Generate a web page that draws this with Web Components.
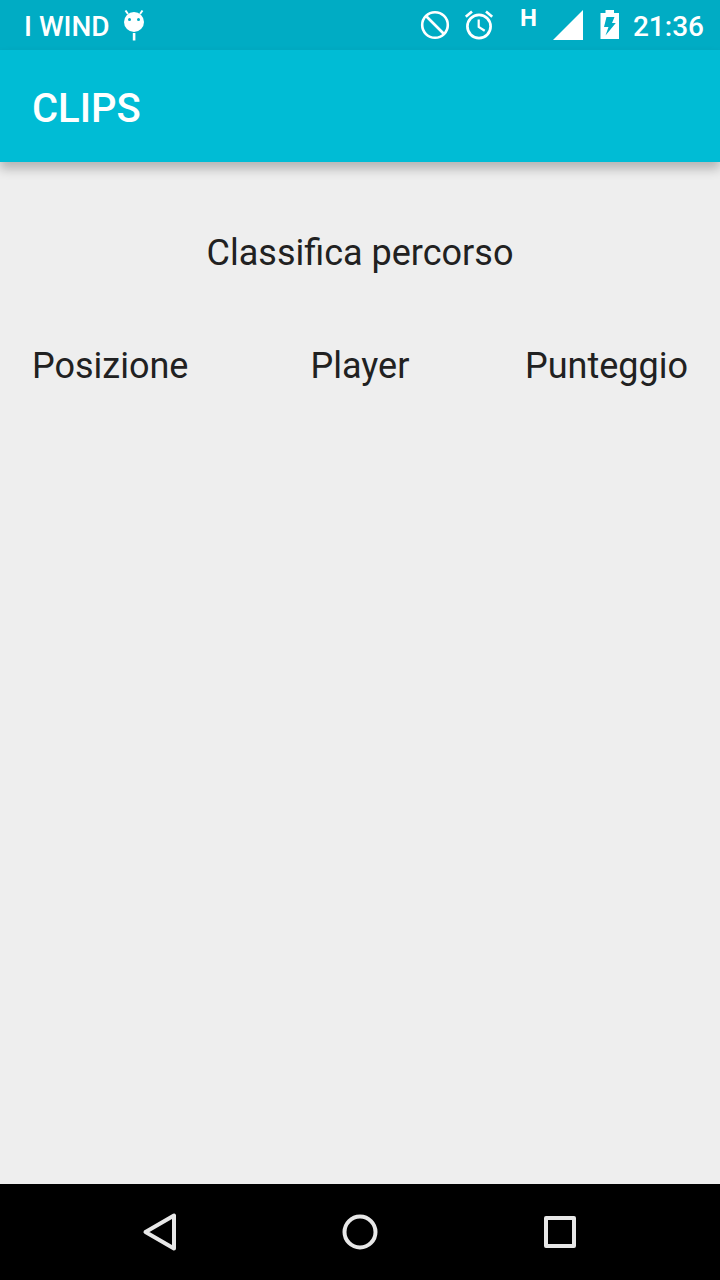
<!DOCTYPE html>
<html lang="it">
<head>
<meta charset="utf-8">
<meta name="viewport" content="width=device-width, initial-scale=1">
<title>CLIPS</title>
<style>
  body { margin: 0; font-family: Roboto, "Noto Sans", sans-serif; background: #eeeeee; }
</style>
</head>
<body>
<clips-screen>
  <status-bar slot="status" carrier="I WIND" network="H" time="21:36"></status-bar>
  <app-bar slot="bar">CLIPS</app-bar>
  <score-board heading="Classifica percorso" columns="Posizione,Player,Punteggio"></score-board>
  <nav-bar slot="nav"></nav-bar>
</clips-screen>

<script>
class BaseElement extends HTMLElement {
  constructor() {
    super();
    this.attachShadow({ mode: "open" });
  }
  connectedCallback() {
    this.shadowRoot.innerHTML = this.render();
  }
}

class ClipsScreen extends BaseElement {
  render() {
    return `
      <style>
        :host { display: flex; flex-direction: column; min-height: 100vh; }
        main { flex: 1; }
      </style>
      <slot name="status"></slot>
      <slot name="bar"></slot>
      <main><slot></slot></main>
      <slot name="nav"></slot>`;
  }
}

class StatusBar extends BaseElement {
  render() {
    return `
      <style>
        :host { display: flex; justify-content: space-between; height: 50px; padding: 0 16px 0 24px;
                background: #00acc4; color: #fff; font-size: 28px; font-weight: 500; line-height: 46px; }
        .side { display: flex; align-items: center; gap: 12px; height: 50px; }
        .label { padding-top: 4px; }
        time { padding: 4px 0 0 1px; }
        svg { display: block; }
        .mobile { display: flex; gap: 15px; margin: 0 4px 0 13px; }
        .network { font-size: 24px; font-weight: 700; line-height: 18px; }
      </style>
      <div class="side">
        <span class="label">${this.getAttribute("carrier")}</span>
        <svg width="24" height="32" viewBox="0 0 24 32" aria-hidden="true">
          <g stroke="#fff" stroke-width="2" fill="none"><path d="M6 5 3.500 1.500M18 5l2.500-3.500"/></g>
          <circle cx="12" cy="13" r="10" fill="#fff"/>
          <circle cx="7.500" cy="10.500" r="1.500" fill="#00acc4"/><circle cx="16.500" cy="10.500" r="1.500" fill="#00acc4"/>
          <path d="M10.800 24h2.600v7.500h-2.600z" fill="#fff"/>
        </svg>
      </div>
      <div class="side">
        <svg width="32" height="32" viewBox="0 0 32 32" fill="none" stroke="#fff" stroke-width="2.600" aria-hidden="true">
          <circle cx="16" cy="16" r="12.800"/><path d="M7 7l18 18"/>
        </svg>
        <svg width="32" height="32" viewBox="0 0 32 32" fill="none" stroke="#fff" stroke-width="2.700" aria-hidden="true">
          <circle cx="16" cy="17.500" r="11.600"/>
          <path d="M2.800 7.700 9 2.500M23 2.500l6.200 5.200"/>
          <path d="M15.700 10.500v7.500l6 3.800" stroke-width="2.200"/>
        </svg>
        <div class="mobile">
          <span class="network">${this.getAttribute("network")}</span>
          <svg width="32" height="32" viewBox="0 0 32 32" fill="#fff" aria-hidden="true"><path d="M31 1v30H1z"/></svg>
        </div>
        <svg width="20" height="32" viewBox="0 0 20 32" aria-hidden="true">
          <path d="M5.500 1h8.500v3h5v26H.500V4h5z" fill="#fff"/>
          <path d="M6.500 8H14.500l-2.500 6h3.800L5.500 26.500l3-8.500H4z" fill="#00acc4"/>
        </svg>
        <time>${this.getAttribute("time")}</time>
      </div>`;
  }
}

class AppBar extends BaseElement {
  render() {
    return `
      <style>
        :host { display: flex; align-items: center; box-sizing: border-box; height: 112px; padding: 6px 32px 0; z-index: 1;
                background: #00bcd5; color: #fff; box-shadow: 0 7px 10px rgba(0, 0, 0, .24); }
        h1 { margin: 0; font-size: 40px; font-weight: 500; line-height: 48px; }
      </style>
      <h1><slot></slot></h1>`;
  }
}

class ScoreBoard extends BaseElement {
  render() {
    const cells = this.getAttribute("columns").split(",")
      .map(label => `<th scope="col">${label}</th>`).join("");
    return `
      <style>
        :host { display: block; padding: 64px 32px; color: #212121; font-size: 36px; line-height: 54px; }
        h2 { margin: 0 0 59px; font-size: inherit; font-weight: 400; text-align: center; }
        table { width: 100%; table-layout: fixed; border-collapse: collapse; }
        th { padding: 0; font-weight: 400; text-align: center; }
        th:first-child { text-align: left; }
        th:last-child { text-align: right; }
      </style>
      <h2 id="heading">${this.getAttribute("heading")}</h2>
      <table aria-labelledby="heading"><thead><tr>${cells}</tr></thead></table>`;
  }
}

class NavBar extends BaseElement {
  render() {
    return `
      <style>
        :host { display: block; background: #000; }
        nav { display: grid; grid-template-columns: repeat(3, 200px); justify-content: center; height: 96px; }
        button { display: grid; place-items: center; padding: 0; border: 0; background: none; cursor: pointer; }
      </style>
      <nav>
        <button type="button" aria-label="Indietro">
          <svg width="40" height="40" viewBox="0 0 40 40" fill="none" stroke="#e8e8e8" stroke-width="4" stroke-linejoin="round"><path d="M34 3.500v33L5.500 20z"/></svg>
        </button>
        <button type="button" aria-label="Home">
          <svg width="40" height="40" viewBox="0 0 40 40" fill="none" stroke="#e8e8e8" stroke-width="4"><circle cx="20" cy="20" r="15.500"/></svg>
        </button>
        <button type="button" aria-label="App recenti">
          <svg width="40" height="40" viewBox="0 0 40 40" fill="none" stroke="#e8e8e8" stroke-width="4" stroke-linejoin="round"><path d="M6 6h28v28H6z"/></svg>
        </button>
      </nav>`;
  }
}

customElements.define("clips-screen", ClipsScreen);
customElements.define("status-bar", StatusBar);
customElements.define("app-bar", AppBar);
customElements.define("score-board", ScoreBoard);
customElements.define("nav-bar", NavBar);
</script>
</body>
</html>
